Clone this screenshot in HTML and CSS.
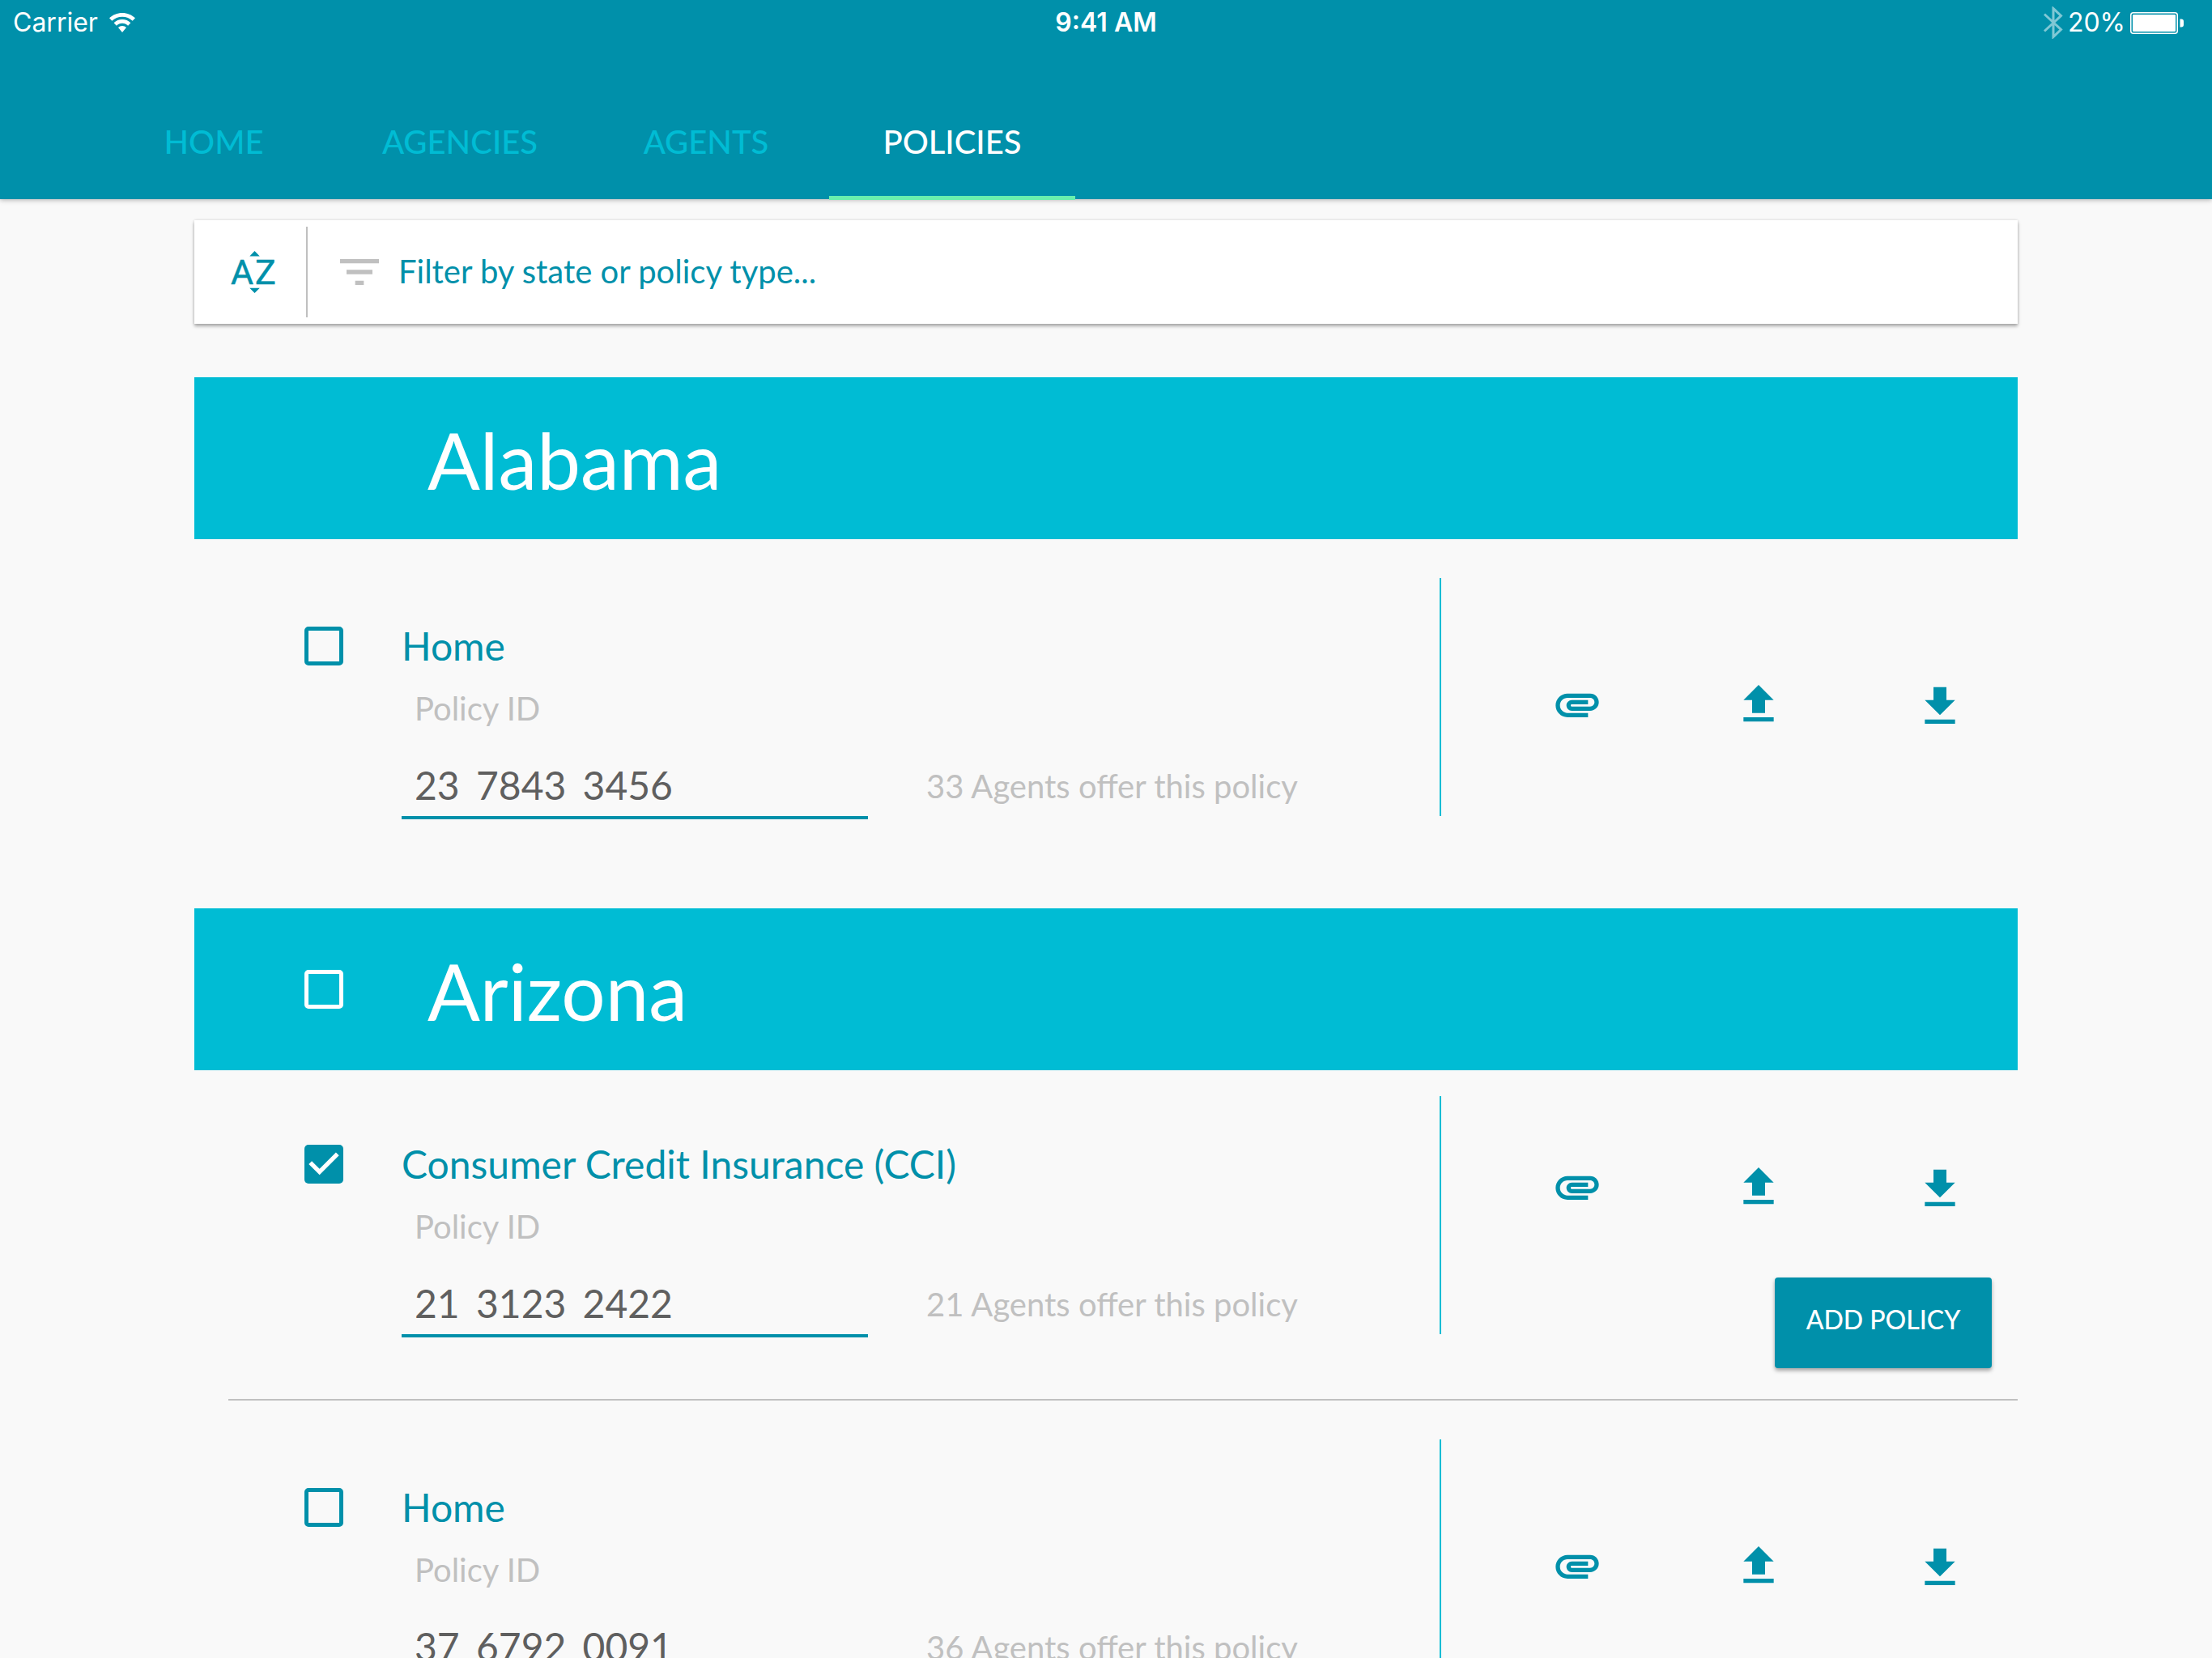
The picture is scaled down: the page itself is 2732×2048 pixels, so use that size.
FILE: index.html
```html
<!DOCTYPE html>
<html lang="en">
<head>
<meta charset="utf-8">
<meta name="viewport" content="width=device-width, initial-scale=1">
<title>Policies</title>
<link rel="stylesheet" href="styles.css">
</head>
<body>
<svg class="sprite" aria-hidden="true">
  <symbol id="attachment" viewBox="0 0 24 24"><path d="M2 12.5C2 9.46 4.46 7 7.5 7H18c2.21 0 4 1.79 4 4s-1.79 4-4 4H9.5C8.12 15 7 13.88 7 12.5S8.12 10 9.5 10H17v2H9.41c-.55 0-.55 1 0 1H18c1.1 0 2-.9 2-2s-.9-2-2-2H7.5C5.57 9 4 10.57 4 12.5S5.57 16 7.5 16H17v2H7.5C4.46 18 2 15.54 2 12.5z"/></symbol>
  <symbol id="upload" viewBox="0 0 24 24"><path d="M9 16h6v-6h4l-7-7-7 7h4zm-4 2h14v2H5z"/></symbol>
  <symbol id="download" viewBox="0 -1 24 24"><path d="M19 9h-4V3H9v6H5l7 7 7-7zM5 18v2h14v-2H5z"/></symbol>
</svg>
<div class="app">
  <header class="app-header">
    <div class="status">
      <div class="status-left">
        <span>Carrier</span>
        <svg class="wifi" viewBox="0 0 32 24" aria-hidden="true">
          <path d="M16 0C9.800 0 4.200 2.400 0 6.300l3.300 3.500C6.600 6.600 11.100 4.700 16 4.700s9.400 1.900 12.700 5.100L32 6.300C27.800 2.400 22.200 0 16 0z"/>
          <path d="M16 8c-4 0-7.700 1.600-10.400 4.200l3.300 3.500c1.800-1.800 4.300-2.900 7.100-2.900s5.300 1.100 7.100 2.900l3.300-3.500C23.700 9.600 20 8 16 8z"/>
          <path d="M16 16c-2 0-3.700.8-5 2l5 6 5-6c-1.300-1.200-3-2-5-2z"/>
        </svg>
      </div>
      <span class="status-time">9:41 AM</span>
      <div class="status-right">
        <svg class="bluetooth" viewBox="0 0 24 40" aria-hidden="true"><path d="M1 9.500L21.500 28.500L12 37.500V2.500L21.500 11.500L1 30.500"/></svg>
        <span>20%</span>
        <svg class="battery" viewBox="0 0 66 27" aria-hidden="true">
          <rect class="battery-case" x="0.750" y="0.750" width="57.500" height="25.500" rx="3"/>
          <rect x="3" y="3" width="53" height="21" rx="1"/>
          <path d="M61.500 8.500h1.500q3 0 3 3v4q0 3-3 3h-1.500z"/>
        </svg>
      </div>
    </div>
    <nav class="tabs">
      <a class="tab" href="#home">HOME</a>
      <a class="tab" href="#agencies">AGENCIES</a>
      <a class="tab" href="#agents">AGENTS</a>
      <a class="tab tab-active" href="#policies" aria-current="page">POLICIES</a>
    </nav>
  </header>

  <main class="content">
    <div class="filter">
      <button class="sort" type="button" aria-label="Sort alphabetically">
        <svg class="icon" viewBox="0 0 64 64" aria-hidden="true">
          <path d="M27.300 12.400h12.500L33.500 6.100zM27.300 51.700h12.500l-6.300 6.200z"/>
          <text x="4" y="47">A</text>
          <text x="34" y="47">Z</text>
        </svg>
      </button>
      <label class="filter-field">
        <svg class="icon icon-muted" viewBox="0 0 24 24" aria-hidden="true"><path d="M10 18h4v-2h-4v2zM3 6v2h18V6H3zm3 7h12v-2H6v2z"/></svg>
        <input class="filter-input" type="text" placeholder="Filter by state or policy type..." aria-label="Filter by state or policy type">
      </label>
    </div>

    <section class="state">
      <div class="state-bar">
        <h2 class="state-name">Alabama</h2>
      </div>
      <article class="policy">
        <div class="policy-info">
          <input class="check" type="checkbox" id="al-home">
          <div class="policy-fields">
            <label class="policy-name" for="al-home">Home</label>
            <div class="policy-row">
              <div class="field">
                <label class="field-label" for="al-home-id">Policy ID</label>
                <input class="field-input" type="text" id="al-home-id" value="23 &#8198;7843 &#8198;3456">
              </div>
              <p class="agents">33 Agents offer this policy</p>
            </div>
          </div>
          <span class="rule"></span>
        </div>
        <div class="policy-side">
          <div class="actions">
            <button class="action" type="button" aria-label="Attach"><svg class="icon"><use href="#attachment"/></svg></button>
            <button class="action" type="button" aria-label="Upload"><svg class="icon"><use href="#upload"/></svg></button>
            <button class="action" type="button" aria-label="Download"><svg class="icon"><use href="#download"/></svg></button>
          </div>
        </div>
      </article>
    </section>

    <section class="state">
      <div class="state-bar">
        <input class="check check-light" type="checkbox" id="az-all" aria-label="Select all in Arizona">
        <h2 class="state-name">Arizona</h2>
      </div>
      <article class="policy policy-selected">
        <div class="policy-info">
          <input class="check" type="checkbox" id="az-cci" checked>
          <div class="policy-fields">
            <label class="policy-name" for="az-cci">Consumer Credit Insurance (CCI)</label>
            <div class="policy-row">
              <div class="field">
                <label class="field-label" for="az-cci-id">Policy ID</label>
                <input class="field-input" type="text" id="az-cci-id" value="21 &#8198;3123 &#8198;2422">
              </div>
              <p class="agents">21 Agents offer this policy</p>
            </div>
          </div>
          <span class="rule"></span>
        </div>
        <div class="policy-side">
          <div class="actions">
            <button class="action" type="button" aria-label="Attach"><svg class="icon"><use href="#attachment"/></svg></button>
            <button class="action" type="button" aria-label="Upload"><svg class="icon"><use href="#upload"/></svg></button>
            <button class="action" type="button" aria-label="Download"><svg class="icon"><use href="#download"/></svg></button>
          </div>
          <button class="add" type="button">ADD POLICY</button>
        </div>
      </article>
      <hr class="divider">
      <article class="policy">
        <div class="policy-info">
          <input class="check" type="checkbox" id="az-home">
          <div class="policy-fields">
            <label class="policy-name" for="az-home">Home</label>
            <div class="policy-row">
              <div class="field">
                <label class="field-label" for="az-home-id">Policy ID</label>
                <input class="field-input" type="text" id="az-home-id" value="37 &#8198;6792 &#8198;0091">
              </div>
              <p class="agents">36 Agents offer this policy</p>
            </div>
          </div>
          <span class="rule"></span>
        </div>
        <div class="policy-side">
          <div class="actions">
            <button class="action" type="button" aria-label="Attach"><svg class="icon"><use href="#attachment"/></svg></button>
            <button class="action" type="button" aria-label="Upload"><svg class="icon"><use href="#upload"/></svg></button>
            <button class="action" type="button" aria-label="Download"><svg class="icon"><use href="#download"/></svg></button>
          </div>
        </div>
      </article>
    </section>
  </main>
</div>
</body>
</html>
```

FILE: styles.css
```css
:root {
  --teal: #0090aa;
  --cyan: #00bcd4;
  --mint: #69f0ae;
  --muted: #c0c0c0;
  --ink: #5f5f5f;
  --page: #f9f9f9;
}

* {
  box-sizing: border-box;
}

body {
  margin: 0;
  background: var(--page);
  color: var(--ink);
  font-family: Lato, "Open Sans", sans-serif;
  font-size: 40px;
  line-height: 48px;
}

button,
input {
  margin: 0;
  padding: 0;
  border: 0;
  background: none;
  color: inherit;
  font: inherit;
}

button {
  cursor: pointer;
}

.sprite {
  display: none;
}

.icon {
  display: block;
  width: 64px;
  height: 64px;
  fill: var(--teal);
}

.icon-muted {
  fill: var(--muted);
}

.app {
  display: flex;
  flex-direction: column;
  height: 100vh;
}

/* Header */

.app-header {
  position: relative;
  z-index: 1;
  flex: none;
  background: var(--teal);
  box-shadow: 0 1px 6px rgba(0, 0, 0, 0.3);
}

.status {
  display: grid;
  grid-template-columns: 1fr auto 1fr;
  align-items: center;
  height: 56px;
  padding: 0 16px;
  color: #fff;
  font-family: Inter, Roboto, sans-serif;
  font-size: 32px;
  line-height: 40px;
}

.status svg {
  fill: #fff;
}

.status-left,
.status-right {
  display: flex;
  align-items: center;
}

.status-left {
  gap: 14px;
}

.status-right {
  justify-content: flex-end;
  gap: 6px;
  padding-right: 19px;
}

.status-time {
  font-weight: 600;
}

.wifi {
  width: 32px;
  height: 24px;
}

.status .bluetooth {
  width: 24px;
  height: 40px;
  fill: none;
  stroke: rgba(255, 255, 255, 0.5);
  stroke-width: 3;
}

.battery {
  width: 66px;
  height: 27px;
}

.status .battery-case {
  fill: none;
  stroke: #fff;
  stroke-width: 1.5;
}

.tabs {
  display: flex;
  padding-left: 112px;
}

.tab {
  width: 304px;
  padding: 95px 0 47px;
  color: var(--cyan);
  font-weight: 500;
  text-align: center;
  text-decoration: none;
}

.tab-active {
  margin-bottom: -1px;
  padding-bottom: 43px;
  border-bottom: 5px solid var(--mint);
  color: #fff;
}

/* Page body */

.content {
  flex: 1;
  min-height: 0;
  padding: 26px 240px 0;
  overflow-y: auto;
  scrollbar-width: none;
}

.filter {
  display: flex;
  align-items: center;
  height: 128px;
  margin-bottom: 66px;
  padding: 8px 0;
  background: #fff;
  box-shadow: 0 3px 4px rgba(0, 0, 0, 0.3), 0 0 3px rgba(0, 0, 0, 0.15);
}

.sort {
  display: flex;
  align-items: center;
  align-self: stretch;
  width: 140px;
  padding-left: 41px;
  border-right: 2px solid var(--muted);
}

.sort text {
  font-family: Roboto, sans-serif;
  font-size: 43px;
  font-weight: 400;
  stroke: var(--teal);
  stroke-width: 0.5;
}

.filter-field {
  display: flex;
  flex: 1;
  align-items: center;
  gap: 16px;
  padding-left: 32px;
}

.filter-input {
  flex: 1;
  height: 48px;
  padding-bottom: 2px;
  color: var(--teal);
  outline: none;
}

.filter-input::placeholder {
  color: var(--teal);
  opacity: 1;
}

/* State groups */

.state {
  margin-bottom: 72px;
}

.state-bar {
  display: grid;
  grid-template-columns: 48px 1fr;
  column-gap: 104px;
  align-items: center;
  height: 200px;
  padding-left: 136px;
  background: var(--cyan);
}

.state-name {
  grid-column: 2;
  margin: 0;
  padding-top: 4px;
  color: #fff;
  font-size: 96px;
  font-weight: 400;
  line-height: 116px;
}

.check {
  flex: none;
  width: 48px;
  height: 48px;
  border: 5px solid var(--teal);
  border-radius: 5px;
  appearance: none;
}

.check:checked {
  border-color: transparent;
  background: var(--teal) url("data:image/svg+xml,%3Csvg xmlns='http://www.w3.org/2000/svg' viewBox='3 3 18 18'%3E%3Cpath fill='%23fff' d='M10 17l-5-5 1.41-1.41L10 14.17l7.59-7.59L19 8z'/%3E%3C/svg%3E") center / 48px 48px no-repeat border-box;
}

.check-light {
  border-color: #fff;
}

/* Policy rows */

.policy {
  display: flex;
  align-items: flex-start;
  padding: 48px 0 38px 136px;
}

.policy-selected {
  padding-top: 32px;
}

.policy-info {
  display: flex;
  flex: 1;
  align-items: flex-start;
}

.policy-info .check {
  margin: 60px 72px 0 0;
}

.policy-fields {
  flex: 1;
  padding-top: 54px;
}

.policy-name {
  display: block;
  margin-bottom: 23px;
  color: var(--teal);
  font-size: 48px;
  line-height: 60px;
}

.policy-row {
  display: flex;
  align-items: flex-end;
  gap: 72px;
}

.field {
  width: 576px;
}

.field-label {
  display: block;
  margin-bottom: 41px;
  padding-left: 16px;
  color: var(--muted);
}

.field-input {
  display: block;
  width: 100%;
  height: 72px;
  padding: 0 16px 10px;
  border-bottom: 4px solid var(--teal);
  font-size: 48px;
  line-height: 58px;
  outline: none;
}

.agents {
  margin: 0;
  padding-bottom: 17px;
  color: var(--muted);
}

.rule {
  align-self: stretch;
  width: 2px;
  margin-bottom: 4px;
  background: var(--cyan);
}

.policy-side {
  display: flex;
  flex-direction: column;
  align-items: flex-end;
  width: 712px;
  padding-top: 124px;
}

.policy-selected .policy-side {
  padding-top: 80px;
}

.actions {
  display: flex;
  gap: 160px;
  padding-right: 64px;
}

.add {
  width: 268px;
  height: 112px;
  margin: 80px 32px 0 0;
  padding-bottom: 8px;
  border-radius: 4px;
  background: var(--teal);
  box-shadow: 0 3px 5px rgba(0, 0, 0, 0.35);
  color: #fff;
  font-size: 32px;
  font-weight: 500;
  line-height: 40px;
}

.divider {
  height: 2px;
  margin: 0 0 0 42px;
  border: 0;
  background: var(--muted);
}
```
